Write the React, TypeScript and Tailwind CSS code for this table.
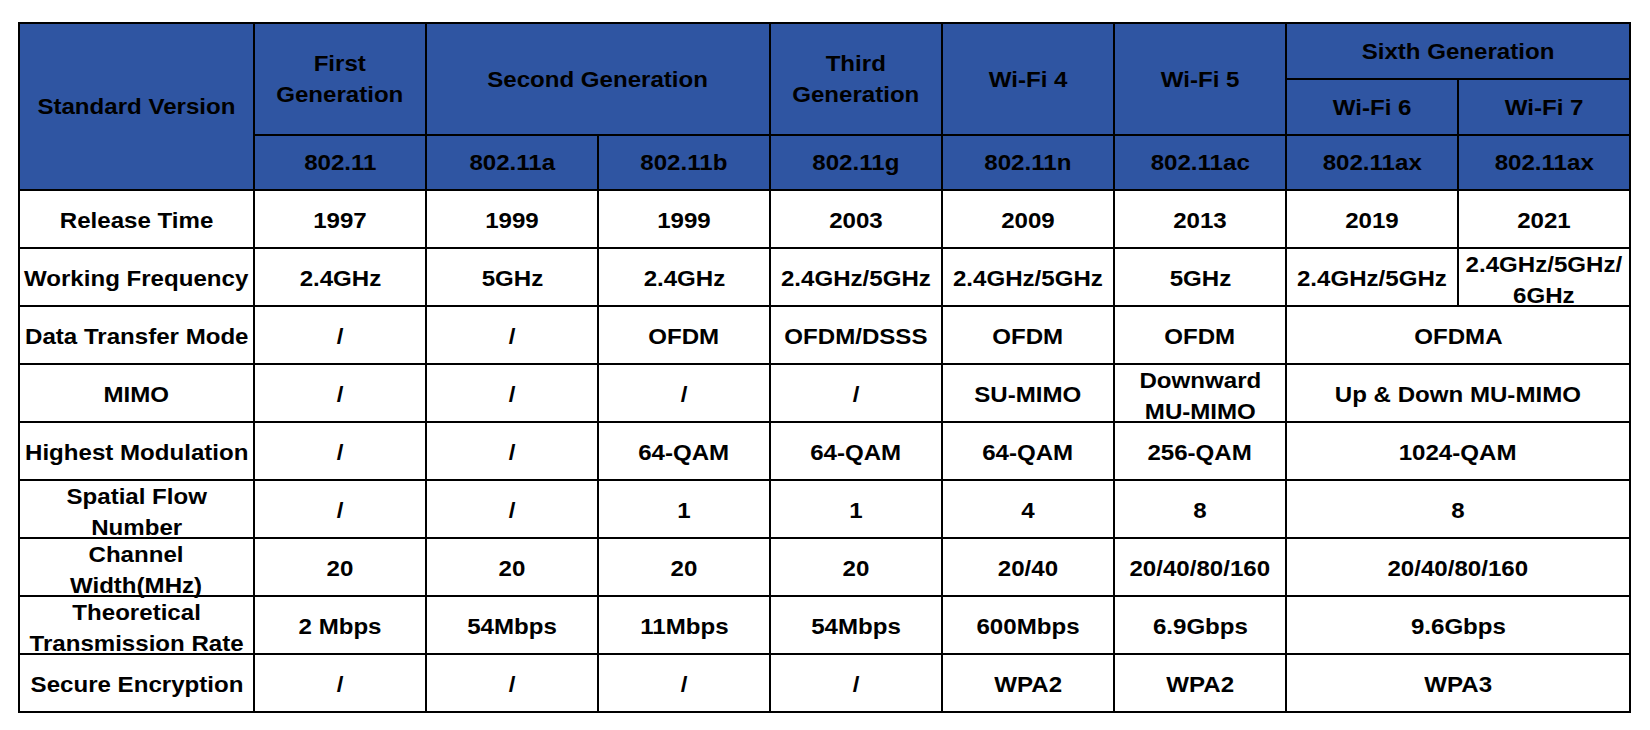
import React from "react";

type Cell = { text: string; span?: number };

const HEADER_BG = "bg-[#2F55A2]";

// Top header block (three rows, with merged cells)
const headerCells: { text: string; className: string }[] = [
  { text: "Standard Version", className: "row-span-3" },
  { text: "First\nGeneration", className: "row-span-2" },
  { text: "Second Generation", className: "col-span-2 row-span-2" },
  { text: "Third\nGeneration", className: "row-span-2" },
  { text: "Wi-Fi 4", className: "row-span-2" },
  { text: "Wi-Fi 5", className: "row-span-2" },
  { text: "Sixth Generation", className: "col-span-2" },
  { text: "Wi-Fi 6", className: "" },
  { text: "Wi-Fi 7", className: "" },
  { text: "802.11", className: "" },
  { text: "802.11a", className: "" },
  { text: "802.11b", className: "" },
  { text: "802.11g", className: "" },
  { text: "802.11n", className: "" },
  { text: "802.11ac", className: "" },
  { text: "802.11ax", className: "" },
  { text: "802.11ax", className: "" },
];

const rows: { label: string; cells: Cell[] }[] = [
  {
    label: "Release Time",
    cells: [
      { text: "1997" },
      { text: "1999" },
      { text: "1999" },
      { text: "2003" },
      { text: "2009" },
      { text: "2013" },
      { text: "2019" },
      { text: "2021" },
    ],
  },
  {
    label: "Working Frequency",
    cells: [
      { text: "2.4GHz" },
      { text: "5GHz" },
      { text: "2.4GHz" },
      { text: "2.4GHz/5GHz" },
      { text: "2.4GHz/5GHz" },
      { text: "5GHz" },
      { text: "2.4GHz/5GHz" },
      { text: "2.4GHz/5GHz/\n6GHz" },
    ],
  },
  {
    label: "Data Transfer Mode",
    cells: [
      { text: "/" },
      { text: "/" },
      { text: "OFDM" },
      { text: "OFDM/DSSS" },
      { text: "OFDM" },
      { text: "OFDM" },
      { text: "OFDMA", span: 2 },
    ],
  },
  {
    label: "MIMO",
    cells: [
      { text: "/" },
      { text: "/" },
      { text: "/" },
      { text: "/" },
      { text: "SU-MIMO" },
      { text: "Downward\nMU-MIMO" },
      { text: "Up & Down MU-MIMO", span: 2 },
    ],
  },
  {
    label: "Highest Modulation",
    cells: [
      { text: "/" },
      { text: "/" },
      { text: "64-QAM" },
      { text: "64-QAM" },
      { text: "64-QAM" },
      { text: "256-QAM" },
      { text: "1024-QAM", span: 2 },
    ],
  },
  {
    label: "Spatial Flow\nNumber",
    cells: [
      { text: "/" },
      { text: "/" },
      { text: "1" },
      { text: "1" },
      { text: "4" },
      { text: "8" },
      { text: "8", span: 2 },
    ],
  },
  {
    label: "Channel\nWidth(MHz)",
    cells: [
      { text: "20" },
      { text: "20" },
      { text: "20" },
      { text: "20" },
      { text: "20/40" },
      { text: "20/40/80/160" },
      { text: "20/40/80/160", span: 2 },
    ],
  },
  {
    label: "Theoretical\nTransmission Rate",
    cells: [
      { text: "2 Mbps" },
      { text: "54Mbps" },
      { text: "11Mbps" },
      { text: "54Mbps" },
      { text: "600Mbps" },
      { text: "6.9Gbps" },
      { text: "9.6Gbps", span: 2 },
    ],
  },
  {
    label: "Secure Encryption",
    cells: [
      { text: "/" },
      { text: "/" },
      { text: "/" },
      { text: "/" },
      { text: "WPA2" },
      { text: "WPA2" },
      { text: "WPA3", span: 2 },
    ],
  },
];

// The source image is slightly stretched sideways, so the text is too
function Label({ text }: { text: string }) {
  return (
    <span className="inline-block scale-x-[1.12] whitespace-pre text-center">
      {text}
    </span>
  );
}

function TableCell({
  text,
  className = "",
}: {
  text: string;
  className?: string;
}) {
  return (
    <div
      className={`flex items-center justify-center overflow-visible ${className}`}
    >
      <Label text={text} />
    </div>
  );
}

// two-line body cells sit a little lower than single-line ones
function bodyPad(text: string) {
  return text.includes("\n") ? "pt-[8px]" : "pt-[4px]";
}

export default function App() {
  return (
    <div className="min-h-screen bg-white pt-[22px] pl-[18px] font-['Liberation_Sans',Arial,sans-serif] text-[21.5px] leading-[31px] font-bold text-black">
      <div className="grid w-max grid-cols-[233px_repeat(8,170px)] grid-rows-[54px_54px_53px_repeat(9,56px)] gap-[2px] bg-black p-[2px]">
        {headerCells.map((h, i) => (
          <TableCell
            key={`h-${i}`}
            text={h.text}
            className={`${HEADER_BG} pt-[2px] ${h.className}`}
          />
        ))}
        {rows.map((row) => (
          <React.Fragment key={row.label}>
            <TableCell
              text={row.label}
              className={`bg-white ${bodyPad(row.label)}`}
            />
            {row.cells.map((c, j) => (
              <TableCell
                key={`${row.label}-${j}`}
                text={c.text}
                className={`bg-white ${bodyPad(c.text)} ${c.span === 2 ? "col-span-2" : ""}`}
              />
            ))}
          </React.Fragment>
        ))}
      </div>
    </div>
  );
}
